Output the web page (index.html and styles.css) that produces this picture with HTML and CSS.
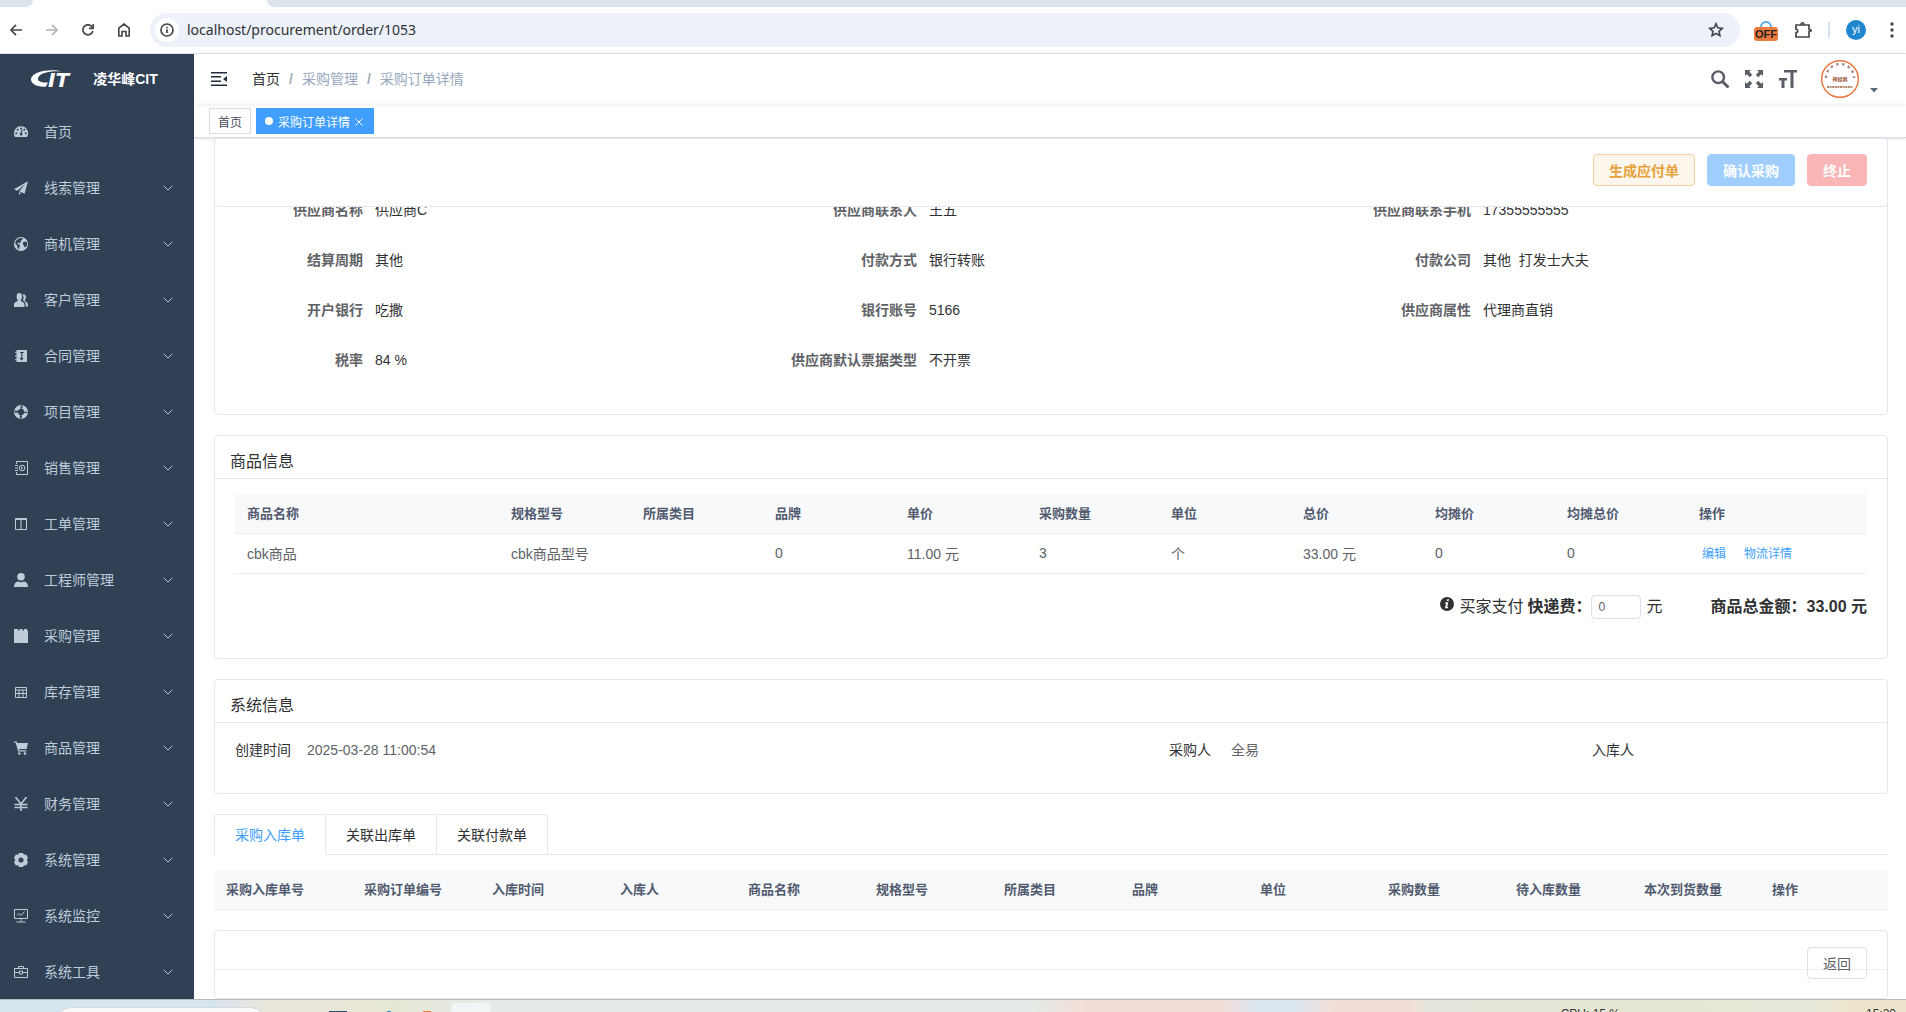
FILE: index.html
```
<!DOCTYPE html>
<html lang="zh-CN">
<head>
    <meta charset="UTF-8">
    <meta name="viewport" content="width=device-width, initial-scale=1.0">
    <title>采购订单详情</title>
    <link rel="stylesheet" href="styles.css">
</head>
<body>

    <!-- 图标 -->
    <svg class="sprite" aria-hidden="true">
        <symbol id="i-dashboard" viewBox="0 0 14 14"><path fill="currentColor" fill-rule="evenodd" d="M7 1.200a7 7 0 0 0-6.100 10.500c.1.300.4.400.7.400h10.800c.3 0 .6-.1.700-.4A7 7 0 0 0 7 1.200zM2.300 9.300a1 1 0 1 1 0-2 1 1 0 0 1 0 2zm1.400-3.600a1 1 0 1 1 0-2 1 1 0 0 1 0 2zM7 2.400a1 1 0 1 1 0 2 1 1 0 0 1 0-2zm0 8.300a1.500 1.500 0 0 1-.3-2.900l1.100-3.400.9.200-.8 3.500A1.500 1.500 0 0 1 7 10.700zM10.300 3.700a1 1 0 1 1 0 2 1 1 0 0 1 0-2zm1.400 5.600a1 1 0 1 1 0-2 1 1 0 0 1 0 2z"/></symbol>
        <symbol id="i-plane" viewBox="0 0 14 14"><path fill="currentColor" d="M13.900.3 0 8.200l3.300 1.500L11.500 2.800 5.200 10.300l5.400 2.500zM5 11v2.900l2.200-1.900z"/></symbol>
        <symbol id="i-globe" viewBox="0 0 14 14"><circle cx="7" cy="7" r="7" fill="currentColor"/><path fill="#304156" d="M6.500 1 9 1.200 8 3l-1.500.8.5 1.400L5.500 6 4 5.500 3.500 7l1.800.5L6 9l-.8 1.500-.4 2-1.300-1.700-.3-2.300L1.200 6.500 1.800 4l2-2zM10 4.500l2.800.5.4 2.500-.9 2-1.500 1-.8-2L9 7.500 9 5.500z"/></symbol>
        <symbol id="i-peoples" viewBox="0 0 14 14"><path fill="currentColor" d="M5.300 0C7.200 0 8 1.500 8 3.400 8 5 7.400 6.300 6.800 7v.8c.3.700 3.500 1.200 3.700 3.600V14H0v-2.600C.2 9 3.500 8.500 3.800 7.800V7c-.7-.7-1.200-2-1.200-3.600C2.600 1.500 3.400 0 5.300 0z"/><path fill="currentColor" d="M8.600 1.200c2.300-.2 3.300 1 3.300 2.800 0 1.500-.5 2.500-1.100 3.200v.6c.3.700 3 1.500 3.200 3.700v1.900h-2.300v-2.200c-.2-2-1.500-2.900-2.900-3.600 1-1.800 1-4.300-.2-6.400z"/></symbol>
        <symbol id="i-contract" viewBox="0 0 14 14"><path fill="currentColor" fill-rule="evenodd" d="M2.500 1H12c.6 0 1 .4 1 1v10c0 .6-.4 1-1 1H2.500v-1.800H1v-1h1.500V7.500H1v-1h1.500V3.800H1v-1h1.500zM6 3v1h1.200v5H5.500L7.600 11.500 9.700 9H8.400V4h1.300V3z"/></symbol>
        <symbol id="i-project" viewBox="0 0 14 14"><circle cx="7" cy="7" r="5" fill="none" stroke="currentColor" stroke-width="3.400" stroke-dasharray="5.850 2" stroke-dashoffset="-1"/><circle cx="7" cy="7" r="6.600" fill="none" stroke="currentColor" stroke-width=".6"/></symbol>
        <symbol id="i-sale" viewBox="0 0 14 14"><g fill="none" stroke="currentColor"><path d="M2.500 3V.5h11v13h-11V11M1 4.500h3M1 7h3M1 9.500h3"/><circle cx="8" cy="7" r="2.800"/><path d="M7.500 5.500v2H9"/></g></symbol>
        <symbol id="i-columns" viewBox="0 0 14 14"><g fill="none" stroke="currentColor"><path d="M1.500 1.500h11v11h-11zM7 2v10"/><path d="M1 2.500h12"/></g></symbol>
        <symbol id="i-user" viewBox="0 0 14 14"><circle cx="7" cy="3.800" r="3.800" fill="currentColor"/><path fill="currentColor" d="M0 14c0-3.500 1.500-5 4-5.500 2 1 4 1 6 0 2.500.5 4 2 4 5.500z"/></symbol>
        <symbol id="i-bag" viewBox="0 0 14 14"><path fill="currentColor" d="M0 0h4v1.500h1.500V0h3v1.500H10V0h3v1.500h1V14H0z"/></symbol>
        <symbol id="i-table" viewBox="0 0 14 14"><g fill="none" stroke="currentColor"><path d="M1.500 2.500h11v10h-11zM1 5h12M1 8.500h12M5 5v7M9 5v7"/></g></symbol>
        <symbol id="i-cart" viewBox="0 0 14 14"><path fill="currentColor" d="M0 .5h2.600l.7 1.500H14l-1.300 6H5l.3 1.200h7v1.300H4.200L1.700 1.800H0z"/><circle cx="5.300" cy="12.500" r="1.300" fill="currentColor"/><circle cx="11" cy="12.500" r="1.300" fill="currentColor"/></symbol>
        <symbol id="i-yen" viewBox="0 0 14 14"><path fill="none" stroke="currentColor" stroke-width="1.600" d="M1.500 0 7 7l5.500-7M7 7v7M.5 7.500h13M.5 10.500h13"/></symbol>
        <symbol id="i-gear" viewBox="0 0 14 14"><path fill="currentColor" fill-rule="evenodd" d="M5 0h4l.8 1.700 2.300-.3L14 4.800 12.700 7 14 9.200l-1.900 3.400-2.300-.3L9 14H5l-.8-1.700-2.300.3L0 9.200 1.300 7 0 4.800l1.900-3.400 2.300.3zM7 4.400a2.600 2.600 0 1 0 0 5.200 2.600 2.600 0 0 0 0-5.200z"/></symbol>
        <symbol id="i-monitor" viewBox="0 0 14 14"><path fill="none" stroke="currentColor" d="M.5.500h13v9H.5zM7 9.500v3M2.500 13h9M3 6.500l2-2L7 6.500l3.500-4"/></symbol>
        <symbol id="i-tool" viewBox="0 0 14 14"><path fill="none" stroke="currentColor" d="M.5 3.500h13v9H.5zM4.500 3.500v-2h5v2M.5 7.500h4.500M9 7.500h4.500M5.500 6h3v3h-3z"/></symbol>
        <symbol id="i-down" viewBox="0 0 10 10"><path fill="none" stroke="currentColor" d="M.7 2.800 5 7l4.300-4.200"/></symbol>
    </svg>

    <!-- 浏览器 -->
    <div class="tabstrip"><span class="tabstrip__left"></span><span class="tabstrip__right"></span></div>
    <div class="browser">
        <button class="browser__btn" aria-label="back"><svg width="12" height="12" viewBox="0 0 12 12"><path d="M12 6H1M6 .8.900 6 6 11.200"/></svg></button>
        <button class="browser__btn browser__btn--off" aria-label="forward"><svg width="12" height="12" viewBox="0 0 12 12"><path d="M0 6h11M6 .8 11.100 6 6 11.200"/></svg></button>
        <button class="browser__btn" aria-label="reload"><svg width="12" height="12" viewBox="0 0 12 12"><path d="M10.800 7A5 5 0 1 1 9.700 2.500L11 4M11.200 0v4.300H7"/></svg></button>
        <button class="browser__btn" aria-label="home"><svg width="12" height="14" viewBox="0 0 12 14"><path d="M.8 5.200 6 1l5.200 4.200V13H8V8.500H4V13H.8z"/></svg></button>
        <div class="omnibox">
            <span class="omnibox__info"><svg width="14" height="14" viewBox="0 0 14 14"><circle cx="7" cy="7" r="6"/><path d="M7 6.200V10M7 3.800v1.400"/></svg></span>
            <input class="omnibox__url" type="text" aria-label="url" value="localhost/procurement/order/1053">
            <svg width="16" height="16" viewBox="0 0 16 16"><path d="m8 1.800 1.800 4 4.500.5-3.300 3 .9 4.400L8 11.500l-3.900 2.200.9-4.400-3.300-3 4.500-.5z"/></svg>
        </div>
        <div class="browser__ext">
            <span class="off"><svg width="14" height="8" viewBox="0 0 14 8"><path fill="none" stroke="#5fa8e8" stroke-width="2" d="M2 8a5 5 0 0 1 10 0"/></svg><b>OFF</b></span>
            <svg class="puzzle" width="18" height="18" viewBox="0 0 18 18"><path d="M2 4h13v4.500c3 0 3 2 0 2V16H2v-4.300c2.500-.5 2.500-3 0-3.500zM7 4c0-3 3-3 3 0"/></svg>
            <span class="divider"></span>
            <span class="profile">yi</span>
            <svg class="dots" width="4" height="16" viewBox="0 0 4 16"><circle cx="2" cy="2" r="1.700"/><circle cx="2" cy="8" r="1.700"/><circle cx="2" cy="14" r="1.700"/></svg>
        </div>
    </div>

    <div class="app">
        <!-- 侧边栏 -->
        <aside class="sidebar">
            <div class="logo">
                <svg width="50" height="24" viewBox="0 0 50 24"><path fill="#fff" d="M31 4.500C20 1.500 1 4 0 12c-.5 5 7 8.500 15 7.500l2-4C10 16 6 14 7 11 9 5.500 20 3.500 31 4.500z"/><text x="17" y="20" fill="#fff" class="logo__mark">IT</text></svg>
                <h1>凌华峰CIT</h1>
            </div>
            <nav class="menu">
                <a href="#"><svg><use href="#i-dashboard"/></svg><span>首页</span></a>
                <a href="#"><svg><use href="#i-plane"/></svg><span>线索管理</span><svg class="arrow"><use href="#i-down"/></svg></a>
                <a href="#"><svg><use href="#i-globe"/></svg><span>商机管理</span><svg class="arrow"><use href="#i-down"/></svg></a>
                <a href="#"><svg><use href="#i-peoples"/></svg><span>客户管理</span><svg class="arrow"><use href="#i-down"/></svg></a>
                <a href="#"><svg><use href="#i-contract"/></svg><span>合同管理</span><svg class="arrow"><use href="#i-down"/></svg></a>
                <a href="#"><svg><use href="#i-project"/></svg><span>项目管理</span><svg class="arrow"><use href="#i-down"/></svg></a>
                <a href="#"><svg><use href="#i-sale"/></svg><span>销售管理</span><svg class="arrow"><use href="#i-down"/></svg></a>
                <a href="#"><svg><use href="#i-columns"/></svg><span>工单管理</span><svg class="arrow"><use href="#i-down"/></svg></a>
                <a href="#"><svg><use href="#i-user"/></svg><span>工程师管理</span><svg class="arrow"><use href="#i-down"/></svg></a>
                <a href="#"><svg><use href="#i-bag"/></svg><span>采购管理</span><svg class="arrow"><use href="#i-down"/></svg></a>
                <a href="#"><svg><use href="#i-table"/></svg><span>库存管理</span><svg class="arrow"><use href="#i-down"/></svg></a>
                <a href="#"><svg><use href="#i-cart"/></svg><span>商品管理</span><svg class="arrow"><use href="#i-down"/></svg></a>
                <a href="#"><svg><use href="#i-yen"/></svg><span>财务管理</span><svg class="arrow"><use href="#i-down"/></svg></a>
                <a href="#"><svg><use href="#i-gear"/></svg><span>系统管理</span><svg class="arrow"><use href="#i-down"/></svg></a>
                <a href="#"><svg><use href="#i-monitor"/></svg><span>系统监控</span><svg class="arrow"><use href="#i-down"/></svg></a>
                <a href="#"><svg><use href="#i-tool"/></svg><span>系统工具</span><svg class="arrow"><use href="#i-down"/></svg></a>
            </nav>
        </aside>

        <div class="main">
            <!-- 顶部导航 -->
            <header class="navbar">
                <button class="hamburger" aria-label="menu"><svg width="16" height="14" viewBox="0 0 16 14"><path fill="#1f2d3d" d="M0 0h16v1.500H0zM0 4h10v1.500H0zM0 8.500h10V10H0zM0 12.500h16V14H0zM16 4v6l-4-3z"/></svg></button>
                <div class="breadcrumb">
                    <a class="home" href="#">首页</a><i>/</i><span>采购管理</span><i>/</i><span>采购订单详情</span>
                </div>
                <div class="navbar__right">
                    <svg width="18" height="18" viewBox="0 0 18 18"><circle cx="7.200" cy="7.200" r="5.800" fill="none" stroke="#5a5e66" stroke-width="2.400"/><path stroke="#5a5e66" stroke-width="3" stroke-linecap="round" d="m12 12 4.500 4.500"/></svg>
                    <svg width="18" height="18" viewBox="0 0 18 18"><path fill="#5a5e66" d="M0 0h6L4.200 1.800l3 3-2.400 2.400-3-3L0 6zM18 0v6l-1.800-1.800-3 3-2.400-2.400 3-3L12 0zM0 18v-6l1.800 1.800 3-3 2.400 2.400-3 3L6 18zM18 18h-6l1.800-1.800-3-3 2.400-2.400 3 3L18 12z"/></svg>
                    <svg width="18" height="18" viewBox="0 0 18 18"><path fill="#5a5e66" d="M5 0h13v2.500h-3.500V18h-3V2.500H5zM0 8h8v2.500H5.500V18h-3v-7.500H0z"/></svg>
                    <svg class="avatar" width="38" height="38" viewBox="0 0 38 38"><circle cx="19" cy="19" r="18.300" fill="#fff" stroke="#e8713c" stroke-width="1.400"/><path fill="none" stroke="#a8887e" stroke-width="2.400" stroke-dasharray="2.400 3.600" d="M5 18a14 14 0 0 1 28 0"/><text x="19" y="21" text-anchor="middle">神经病</text><path stroke="#b08a70" stroke-width="2" stroke-dasharray="2 .6" d="M6 27h26"/></svg>
                    <svg class="caret" width="8" height="5" viewBox="0 0 8 5"><path fill="#5a6b7d" d="M0 0h8L4 4.500z"/></svg>
                </div>
            </header>
            <div class="tags">
                <a class="tag" href="#">首页</a>
                <a class="tag tag--active" href="#">采购订单详情<svg width="8" height="8" viewBox="0 0 8 8"><path stroke="#fff" d="m.5.500 7 7M7.500.500l-7 7"/></svg></a>
            </div>

            <main class="content">
                <div class="action-bar">
                    <button class="btn btn--warning">生成应付单</button>
                    <button class="btn btn--primary" disabled>确认采购</button>
                    <button class="btn btn--danger" disabled>终止</button>
                </div>

                <!-- 供应商信息 -->
                <section class="card supplier">
                    <dl class="info">
                        <div><dt>供应商名称</dt><dd>供应商C</dd></div>
                        <div><dt>供应商联系人</dt><dd>王五</dd></div>
                        <div><dt>供应商联系手机</dt><dd>17355555555</dd></div>
                        <div><dt>结算周期</dt><dd>其他</dd></div>
                        <div><dt>付款方式</dt><dd>银行转账</dd></div>
                        <div><dt>付款公司</dt><dd>其他&nbsp; 打发士大夫</dd></div>
                        <div><dt>开户银行</dt><dd>吃撒</dd></div>
                        <div><dt>银行账号</dt><dd>5166</dd></div>
                        <div><dt>供应商属性</dt><dd>代理商直销</dd></div>
                        <div><dt>税率</dt><dd>84 %</dd></div>
                        <div><dt>供应商默认票据类型</dt><dd>不开票</dd></div>
                    </dl>
                </section>

                <!-- 商品信息 -->
                <section class="card goods">
                    <h2 class="card__header">商品信息</h2>
                    <div class="card__body">
                        <table class="table table--goods">
                            <thead>
                                <tr><th class="wide">商品名称</th><th>规格型号</th><th>所属类目</th><th>品牌</th><th>单价</th><th>采购数量</th><th>单位</th><th>总价</th><th>均摊价</th><th>均摊总价</th><th class="ops">操作</th></tr>
                            </thead>
                            <tbody>
                                <tr><td>cbk商品</td><td>cbk商品型号</td><td></td><td>0</td><td>11.00 元</td><td>3</td><td>个</td><td>33.00 元</td><td>0</td><td>0</td><td><a href="#">编辑</a><a href="#">物流详情</a></td></tr>
                            </tbody>
                        </table>
                        <div class="summary">
                            <svg width="14" height="14" viewBox="0 0 14 14"><circle cx="7" cy="7" r="7" fill="#303133"/><path fill="#fff" d="M7.200 2.300h1.800L8.600 4H6.800zM5.200 5.200h3.100L7.200 10h1l-.3 1.200H5l1.100-4.800h-1z"/></svg>
                            <span>买家支付</span>
                            <label for="fee">快递费：</label>
                            <input id="fee" type="text" value="0">
                            <span>元</span>
                            <strong>商品总金额：33.00 元</strong>
                        </div>
                    </div>
                </section>

                <!-- 系统信息 -->
                <section class="card system">
                    <h2 class="card__header">系统信息</h2>
                    <dl class="card__body system__row">
                        <div><dt>创建时间</dt><dd>2025-03-28 11:00:54</dd></div>
                        <div><dt>采购人</dt><dd>全易</dd></div>
                        <div><dt>入库人</dt><dd></dd></div>
                    </dl>
                </section>

                <!-- 关联单据 -->
                <div class="tabs">
                    <button class="tabs__item tabs__item--active">采购入库单</button>
                    <button class="tabs__item">关联出库单</button>
                    <button class="tabs__item">关联付款单</button>
                </div>
                <table class="table table--stock">
                    <thead>
                        <tr><th class="first">采购入库单号</th><th>采购订单编号</th><th>入库时间</th><th>入库人</th><th>商品名称</th><th>规格型号</th><th>所属类目</th><th>品牌</th><th>单位</th><th>采购数量</th><th>待入库数量</th><th>本次到货数量</th><th>操作</th></tr>
                    </thead>
                </table>

                <section class="card footer-card">
                    <div class="footer-card__header"><button class="btn btn--plain">返回</button></div>
                </section>
            </main>
        </div>
    </div>

    <!-- 任务栏 -->
    <footer class="taskbar">
        <span class="taskbar__search"></span>
        <span class="taskbar__icon taskbar__icon--navy"></span>
        <span class="taskbar__icon taskbar__icon--blue"></span>
        <span class="taskbar__icon taskbar__icon--orange"></span>
        <span class="taskbar__window"></span>
        <span class="taskbar__cpu">CPU: 15 %</span>
        <span class="taskbar__time">15:20</span>
    </footer>

</body>
</html>
```
FILE: styles.css
```
* {
    box-sizing: border-box;
}

body {
    margin: 0;
    height: 100vh;
    display: flex;
    flex-direction: column;
    overflow: hidden;
    background-color: #fff;
    color: #303133;
    font-family: "Liberation Sans", "Noto Sans CJK SC", sans-serif;
    font-size: 14px;
}

h1, h2, dl, dd {
    margin: 0;
}

a {
    text-decoration: none;
}

button, input {
    font-family: inherit;
}

.sprite {
    position: absolute;
    width: 0;
    height: 0;
}

/* 浏览器 */
.tabstrip {
    flex: none;
    height: 7px;
    display: flex;
    justify-content: space-between;
}

.tabstrip__left {
    width: 33px;
    background-color: #dce3ea;
    border-bottom-right-radius: 8px;
}

.tabstrip__right {
    width: calc(100% - 267px);
    background-color: #dce3ea;
    border-bottom-left-radius: 8px;
}

.browser {
    flex: none;
    height: 47px;
    display: flex;
    align-items: center;
    padding: 0 12px 0 10px;
    border-bottom: 1px solid #dcdfe6;
}

.browser svg {
    display: block;
    fill: none;
    stroke: #45484c;
    stroke-width: 1.7;
}

.browser__btn {
    width: 12px;
    margin-right: 24px;
    padding: 0;
    border: none;
    background: none;
}

.browser .browser__btn--off svg {
    stroke: #b5b5b5;
}

.browser__btn:nth-of-type(4) {
    margin-right: 20px;
}

.omnibox {
    flex: 1;
    height: 34px;
    display: flex;
    align-items: center;
    padding: 0 16px 0 5px;
    border-radius: 17px;
    background-color: #ecf1fa;
}

.omnibox__info {
    width: 24px;
    height: 24px;
    display: flex;
    align-items: center;
    justify-content: center;
    border-radius: 50%;
    background-color: #fff;
}

.omnibox__url {
    flex: 1;
    margin: 0 8px;
    padding: 0 0 2px;
    border: none;
    outline: none;
    background: none;
    color: #303236;
    font-family: "Noto Sans", "Open Sans", sans-serif;
    font-size: 14px;
}

.browser__ext {
    display: flex;
    align-items: center;
}

.off {
    width: 24px;
    height: 22px;
    margin: 0 16px 0 14px;
    display: flex;
    flex-direction: column;
    align-items: center;
}

.off b {
    width: 24px;
    height: 14px;
    border-radius: 3px;
    background-color: #ee7b3e;
    color: #222;
    font-size: 11px;
    line-height: 14px;
    text-align: center;
}

.divider {
    width: 2px;
    height: 16px;
    margin: 0 16px;
    background-color: #d3e5ee;
}

.profile {
    width: 20px;
    height: 20px;
    margin-right: 24px;
    border-radius: 50%;
    background-color: #1f87d0;
    color: #fff;
    font-size: 11px;
    line-height: 19px;
    text-align: center;
}

.browser .dots {
    fill: #45484c;
    stroke: none;
}

/* 布局 */
.app {
    flex: 1;
    min-height: 0;
    display: flex;
}

.main {
    flex: 1;
    min-width: 0;
    display: flex;
    flex-direction: column;
}

/* 侧边栏 */
.sidebar {
    flex: none;
    width: 194px;
    overflow: hidden;
    background-color: #304156;
}

.logo {
    height: 50px;
    display: flex;
    align-items: center;
    justify-content: center;
    gap: 12px;
    padding-right: 5px;
}

.logo svg {
    overflow: visible;
}

.logo h1 {
    color: #fff;
    font-size: 14px;
    line-height: 50px;
}

.logo__mark {
    font-family: "DejaVu Sans", sans-serif;
    font-size: 20px;
    font-weight: bold;
    font-style: italic;
}

.menu a {
    height: 56px;
    display: flex;
    align-items: center;
    gap: 16px;
    padding: 0 21px 0 14px;
    color: #bfcbd9;
}

.menu span {
    padding-bottom: 2px;
}

.menu svg {
    width: 14px;
    height: 14px;
}

.menu .arrow {
    width: 10px;
    height: 10px;
    margin-left: auto;
}

/* 顶部导航 */
.navbar {
    flex: none;
    height: 50px;
    display: flex;
    align-items: center;
    padding: 0 28px 0 17px;
    box-shadow: 0 1px 4px rgba(0, 21, 41, 0.08);
}

.hamburger {
    margin-right: 25px;
    padding: 0;
    border: none;
    background: none;
}

.hamburger svg {
    display: block;
}

.breadcrumb {
    padding-bottom: 2px;
    color: #97a8be;
}

.breadcrumb .home {
    color: #303133;
}

.breadcrumb i {
    margin: 0 9px;
    color: #a5abb5;
    font-style: normal;
    font-weight: bold;
}

.navbar__right {
    margin-left: auto;
    display: flex;
    align-items: center;
    gap: 16px;
}

.navbar__right .avatar {
    margin-left: 8px;
}

.avatar text {
    fill: #a0553a;
    font-size: 5px;
    font-weight: bold;
}

.navbar__right .caret {
    margin: 22px 0 0 -5px;
}

.tags {
    flex: none;
    height: 34px;
    display: flex;
    gap: 5px;
    padding: 4px 15px;
    border-bottom: 1px solid #d8dce5;
    box-shadow: 0 1px 3px rgba(0, 0, 0, 0.12);
}

.tag {
    height: 26px;
    display: flex;
    align-items: center;
    padding: 0 8px;
    border: 1px solid #d8dce5;
    color: #495060;
    font-size: 12px;
}

.tag--active {
    padding-right: 10px;
    border-color: #409eff;
    background-color: #409eff;
    color: #fff;
}

.tag--active::before {
    content: "";
    width: 8px;
    height: 8px;
    margin-right: 5px;
    border-radius: 50%;
    background-color: #fff;
}

.tag--active svg {
    margin: 2px 0 0 5px;
}

/* 内容 */
.content {
    position: relative;
    flex: 1;
    overflow: hidden;
    padding: 0 18px 0 20px;
}

.action-bar {
    position: absolute;
    top: 0;
    left: 20px;
    right: 18px;
    height: 69px;
    display: flex;
    justify-content: flex-end;
    gap: 12px;
    padding: 15px 20px;
    border: 1px solid #e4e7ed;
    border-radius: 4px;
    background-color: #fff;
}

.btn {
    height: 32px;
    padding: 0 15px 1px;
    border: 1px solid;
    border-radius: 4px;
    font-size: 14px;
    font-weight: bold;
}

.btn--warning {
    border-color: #f3d19e;
    background-color: #fdf6ec;
    color: #e6a23c;
}

.btn--primary {
    border-color: #a0cfff;
    background-color: #a0cfff;
    color: #fff;
}

.btn--danger {
    border-color: #fab6b6;
    background-color: #fab6b6;
    color: #fff;
}

.btn--plain {
    border-color: #dcdfe6;
    background: none;
    color: #606266;
    font-weight: normal;
}

.card {
    margin-bottom: 20px;
    border: 1px solid #e4e7ed;
    border-radius: 4px;
}

.card__header {
    padding: 15px 15px 6px;
    border-bottom: 1px solid #e4e7ed;
    font-size: 16px;
    font-weight: normal;
    line-height: 21px;
}

.card__body {
    padding: 15px 20px 20px;
}

.supplier {
    padding: 55px 0 20px 10px;
}

.info {
    display: grid;
    grid-template-columns: repeat(3, 1fr);
}

.info div {
    height: 50px;
    display: flex;
    line-height: 32px;
}

.info dt {
    width: 150px;
    padding-right: 12px;
    color: #606266;
    font-weight: bold;
    text-align: right;
}

/* 表格 */
.table {
    width: 100%;
    border-collapse: separate;
    border-spacing: 0;
    table-layout: fixed;
}

.table th, .table td {
    height: 40px;
    padding: 0 0 2px 12px;
    border-bottom: 1px solid #ebeef5;
    color: #606266;
    text-align: left;
    white-space: nowrap;
}

.table th {
    background-color: #f8f9fb;
    color: #515a6e;
    font-size: 13px;
}

.table .wide {
    width: 264px;
}

.table .ops {
    width: 180px;
}

.table .first {
    width: 138px;
}

.table td a {
    margin: 0 15px 0 3px;
    color: #409eff;
    font-size: 12px;
}

.goods .card__body {
    height: 179px;
}

.summary {
    display: flex;
    align-items: center;
    margin-top: 21px;
    font-size: 16px;
    line-height: 24px;
}

.summary svg {
    margin: 0 5px 6px auto;
}

.summary label {
    margin-left: 4px;
    font-weight: bold;
}

.summary input {
    width: 50px;
    height: 24px;
    margin-right: 5px;
    padding: 0 6px;
    border: 1px solid #dcdfe6;
    border-radius: 4px;
    color: #606266;
    font-size: 12px;
}

.summary strong {
    margin-left: 48px;
}

.system__row {
    height: 70px;
    display: grid;
    grid-template-columns: 934fr 423fr 275fr;
    line-height: 24px;
}

.system__row div {
    display: flex;
    gap: 16px;
}

.system__row dd {
    color: #606266;
}

.system__row div + div {
    gap: 20px;
}

/* 标签页 */
.tabs {
    display: flex;
    margin-bottom: 15px;
}

.tabs::after {
    content: "";
    flex: 1;
    border-bottom: 1px solid #e4e7ed;
}

.tabs__item {
    height: 41px;
    padding: 0 20px 2px;
    border: 1px solid #e4e7ed;
    border-left: none;
    background: none;
    color: #303133;
    font-size: 14px;
}

.tabs__item:first-child {
    border-left: 1px solid #e4e7ed;
    border-top-left-radius: 4px;
}

.tabs__item:last-of-type {
    border-top-right-radius: 4px;
}

.tabs__item--active {
    border-bottom-color: transparent;
    color: #409eff;
}

.table--stock {
    margin-bottom: 20px;
}

.footer-card {
    height: 69px;
}

.footer-card__header {
    height: 39px;
    display: flex;
    justify-content: flex-end;
    padding: 16px 20px 0;
    border-bottom: 1px solid #ebeef5;
}

.footer-card .btn {
    flex: none;
}

/* 任务栏 */
.taskbar {
    position: relative;
    flex: none;
    height: 13px;
    overflow: hidden;
    border-top: 1px solid #b4bcbc;
    background: linear-gradient(90deg, #d5e6ee 0 11%, #dfe2ea 12%, #eae8dc 14%, #e6e6d6 21%, #e5ece7 26% 54%, #f2ddd6 57% 64%, #dce6f0 66% 68%, #f2ddd6 70% 74%, #e4e6dc 75%, #e5e6d2 88%, #e6e8dc 95%, #ece5cc 97%);
}

.taskbar span {
    position: absolute;
    top: 7px;
    font-size: 12px;
    line-height: 14px;
}

.taskbar__search {
    left: 56px;
    width: 210px;
    height: 30px;
    border: 1px solid #d3d9dc;
    border-radius: 15px;
    background-color: #f8fafa;
}

.taskbar .taskbar__icon {
    top: 11px;
    height: 10px;
}

.taskbar__icon--navy {
    left: 329px;
    width: 18px;
    background-color: #23486b;
}

.taskbar__icon--blue {
    left: 387px;
    width: 4px;
    background-color: #2b87d0;
}

.taskbar__icon--orange {
    left: 423px;
    width: 8px;
    background-color: #e58049;
}

.taskbar .taskbar__window {
    top: 3px;
    left: 451px;
    width: 40px;
    height: 30px;
    border-radius: 4px;
    background-color: #f2f5f6;
}

.taskbar__cpu {
    right: 286px;
}

.taskbar__time {
    right: 10px;
}
```
